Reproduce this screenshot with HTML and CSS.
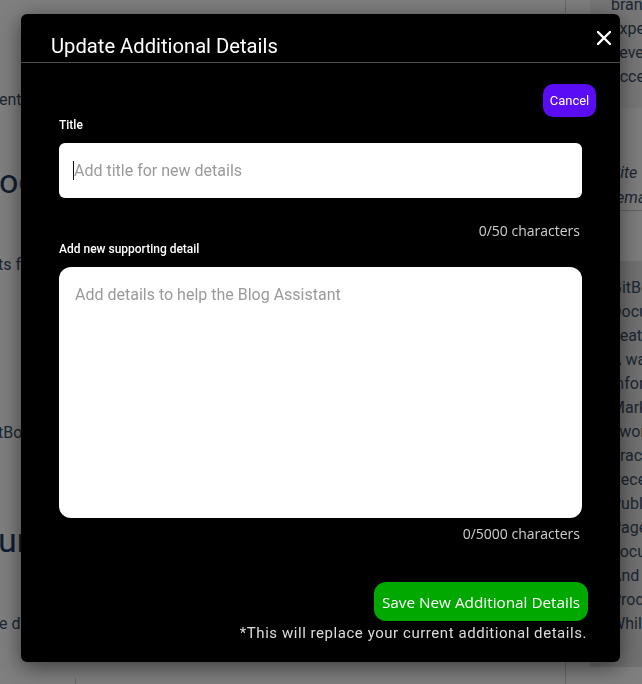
FILE: index.html
```html
<!DOCTYPE html>
<html lang="en">
<head>
<meta charset="utf-8">
<title>Update Additional Details</title>
<link rel="stylesheet" href="styles.css">
</head>
<body>
<div class="page">
  <main class="main">
    <p class="text t1">ent of your blog content</p>
    <h2 class="heading h1">oo</h2>
    <p class="text t2">ts from your workspace</p>
    <p class="text t3">tBook documentation</p>
    <h2 class="heading h2">ur</h2>
    <p class="text t4">e details for the assistant</p>
    <div class="table-edge"></div>
  </main>
  <aside class="side">
    <div class="side-card">
      <p class="side-line">brand</p>
      <p class="side-line">experience</p>
      <p class="side-line">seven</p>
      <p class="side-line">access</p>
    </div>
    <div class="side-mid">
      <p class="side-line side-italic">Site</p>
      <p class="side-line side-italic">remarks</p>
    </div>
    <div class="side-panel">
      <p class="side-line">GitBook</p>
      <p class="side-line">Document</p>
      <p class="side-line">Features</p>
      <p class="side-line">A way</p>
      <p class="side-line">Information</p>
      <p class="side-line">Marketing</p>
      <p class="side-line">sworn</p>
      <p class="side-line">Track</p>
      <p class="side-line">Receive</p>
      <p class="side-line">Publish</p>
      <p class="side-line">Page</p>
      <p class="side-line">Focus</p>
      <p class="side-line">And</p>
      <p class="side-line">Process</p>
      <p class="side-line">While</p>
    </div>
  </aside>
</div>

<div class="backdrop">
  <div class="modal" role="dialog" aria-labelledby="modal-title">
    <header class="modal-head">
      <h2 class="modal-title" id="modal-title">Update Additional Details</h2>
      <button class="close" type="button" aria-label="Close">
        <svg width="14" height="14" viewBox="0 0 14 14" aria-hidden="true">
          <path d="M1 1 L13 13 M13 1 L1 13" stroke="#fff" stroke-width="2.3" stroke-linecap="square" fill="none"/>
        </svg>
      </button>
    </header>
    <div class="modal-body">
      <div class="cancel-row"><button class="btn-cancel" type="button">Cancel</button></div>
      <label class="field-label" for="title-in">Title</label>
      <div class="input-wrap">
        <input class="field-input" id="title-in" type="text" placeholder="Add title for new details">
        <span class="caret" aria-hidden="true"></span>
      </div>
      <div class="counter">0/50 characters</div>
      <label class="field-label" for="detail-in">Add new supporting detail</label>
      <textarea class="field-area" id="detail-in" placeholder="Add details to help the Blog Assistant"></textarea>
      <div class="counter counter-tight">0/5000 characters</div>
      <div class="save-row"><button class="btn-save" type="button">Save New Additional Details</button></div>
      <p class="footnote">*This will replace your current additional details.</p>
    </div>
  </div>
</div>
</body>
</html>
```

FILE: styles.css
```css
* { box-sizing: border-box; }

html, body {
  margin: 0;
  height: 100%;
  overflow: hidden;
}

body {
  background: #ffffff;
  font-family: Roboto, "Liberation Sans", sans-serif;
  color: #34496a;
}

/* ---------- background page ---------- */
.page {
  display: grid;
  grid-template-columns: 566px 1fr;
  column-gap: 24px;
  height: 100%;
}

.main {
  border-right: 1px solid #d2d2d2;
  display: flex;
  flex-direction: column;
  white-space: nowrap;
  overflow: hidden;
}

.text {
  margin: 0;
  font-size: 16px;
  line-height: 24px;
  color: #3a4c66;
}

.heading {
  margin: 0;
  font-size: 34px;
  line-height: 40px;
  font-weight: 400;
  color: #1e3a66;
}

.t1 { margin-top: 88px; margin-left: -1px; }
.h1 { margin-top: 49px; margin-left: -1px; }
.t2 { margin-top: 52px; margin-left: -2px; }
.t3 { margin-top: 144px; margin-left: -2px; }
.h2 { margin-top: 75px; margin-left: -2px; }
.t4 { margin-top: 52px; margin-left: -1px; }

.table-edge {
  margin-top: 42px;
  margin-left: 75px;
  height: 40px;
  border-left: 1px solid #d2d2d2;
}

.side {
  display: flex;
  flex-direction: column;
  white-space: nowrap;
  overflow: hidden;
}

.side-line {
  margin: 0;
  font-size: 16px;
  line-height: 24px;
  color: #3a4c66;
  padding-left: 21px;
}

.side-card {
  background: #efefef;
  margin-top: -7px;
  padding-bottom: 19px;
}

.side-mid {
  background: #fbfbfb;
  padding-top: 52px;
  padding-bottom: 50px;
}

.side-italic {
  font-style: italic;
  line-height: 25px;
}

.side-mid .side-italic:last-child {
  border-bottom: 1px solid #c8c8c8;
}

.side-panel {
  background: #e2e2e2;
  padding-top: 15px;
  height: 406px;
}

/* ---------- modal ---------- */
.backdrop {
  position: fixed;
  inset: 0;
  background: rgba(0, 0, 0, 0.5);
  display: flex;
  align-items: flex-start;
  padding: 14px 0 0 21px;
}

.modal {
  position: relative;
  width: 599px;
  background: #000;
  border-radius: 6px;
  box-shadow: 0 5px 22px rgba(0, 0, 0, 0.55);
  color: #fff;
}

.modal-head {
  height: 49px;
  border-bottom: 1px solid #4a4a4a;
  padding: 19px 0 0 30px;
}

.modal-title {
  margin: 0;
  font-family: Roboto, sans-serif;
  font-size: 20.2px;
  line-height: 26px;
  font-weight: 400;
  color: #fff;
}

.close {
  position: absolute;
  top: 17px;
  right: 9px;
  width: 14px;
  height: 14px;
  padding: 0;
  border: 0;
  background: none;
  display: flex;
  cursor: pointer;
}

.modal-body {
  padding: 0 38px 19px;
  display: flex;
  flex-direction: column;
}

.cancel-row {
  display: flex;
  justify-content: flex-end;
  margin-top: 21px;
  margin-right: -14px;
}

.btn-cancel {
  width: 53px;
  height: 33px;
  border: 0;
  border-radius: 10px;
  background: #5a0cf4;
  color: #fff;
  font-family: Roboto, sans-serif;
  font-size: 13px;
  padding: 0;
}

.field-label {
  margin-top: 1px;
  font-family: Roboto, sans-serif;
  font-size: 12px;
  line-height: 14px;
  font-weight: 500;
  color: #fff;
}

.input-wrap {
  position: relative;
  display: flex;
  flex-direction: column;
  margin-top: 11px;
}

.field-input {
  height: 55px;
  border: 0;
  border-radius: 6px;
  background: #fff;
  padding: 0 15px;
  font-family: Roboto, sans-serif;
  font-size: 16px;
  color: #222;
  outline: none;
}

.caret {
  position: absolute;
  left: 14px;
  top: 18px;
  width: 1px;
  height: 19px;
  background: #111;
}

.field-input::placeholder,
.field-area::placeholder {
  color: #9a9a9a;
}

.field-area {
  margin-top: 11px;
  height: 251px;
  border: 0;
  border-radius: 12px;
  background: #fff;
  padding: 18px 16px;
  font-family: Roboto, sans-serif;
  font-size: 16px;
  line-height: 20px;
  resize: none;
  outline: none;
}

.counter {
  margin-top: 23px;
  padding-right: 2px;
  text-align: right;
  font-family: "Open Sans", "Noto Sans", sans-serif;
  font-size: 14px;
  line-height: 20px;
  color: #cfcfcf;
}

.counter-tight { margin-top: 6px; }

.save-row {
  display: flex;
  justify-content: flex-end;
  margin-top: 38px;
  margin-right: -6px;
}

.btn-save {
  width: 214px;
  height: 39px;
  border: 0;
  border-radius: 12px;
  background: #00a800;
  color: #fff;
  font-family: "Open Sans", "Noto Sans", sans-serif;
  font-size: 15.3px;
  padding: 0;
}

.footnote {
  margin: 2px -5px 0 0;
  text-align: right;
  font-family: Roboto, sans-serif;
  font-size: 15px;
  line-height: 20px;
  letter-spacing: 0.55px;
  color: #dcdcdc;
}
```
